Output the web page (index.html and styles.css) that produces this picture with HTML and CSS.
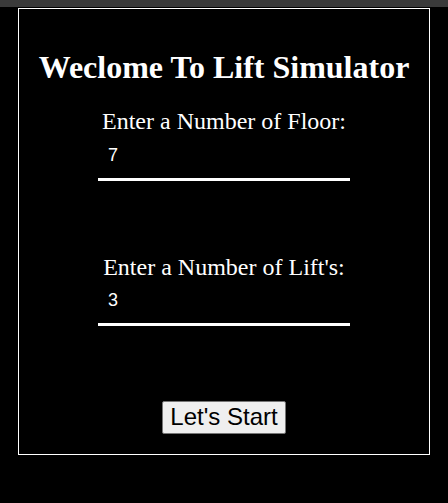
FILE: index.html
```html
<!DOCTYPE html>
<html lang="en">
<head>
<meta charset="utf-8">
<title>Lift Simulator</title>
<link rel="stylesheet" href="styles.css">
</head>
<body>
<div class="topbar"></div>
<main class="panel">
  <h1 class="title">Weclome To Lift Simulator</h1>
  <div class="field">
    <label class="field-label" for="floors">Enter a Number of Floor:</label>
    <input class="field-input" id="floors" type="text" value="7">
  </div>
  <div class="field field-second">
    <label class="field-label" for="lifts">Enter a Number of Lift's:</label>
    <input class="field-input" id="lifts" type="text" value="3">
  </div>
  <button class="start-btn" type="button">Let's Start</button>
</main>
</body>
</html>
```
FILE: styles.css
```css
html, body {
  margin: 0;
  padding: 0;
  background: #000;
  height: 100%;
  overflow: hidden;
}
body {
  font-family: "Liberation Serif", "Times New Roman", serif;
  color: #fff;
}
.topbar {
  height: 7px;
  background: #3a3a3a;
}
.panel {
  margin: 1px 18px 0;
  border: 1px solid #fff;
  box-sizing: border-box;
  height: 447px;
  display: flex;
  flex-direction: column;
  align-items: center;
  padding-top: 40px;
}
.title {
  margin: 0;
  font-size: 32px;
  font-weight: bold;
  line-height: 37px;
}
.field {
  display: flex;
  flex-direction: column;
  align-items: center;
  margin-top: 22px;
}
.field-second {
  margin-top: 73px;
}
.field-label {
  font-size: 24px;
  line-height: 27.6px;
}
.field-input {
  width: 252px;
  box-sizing: border-box;
  background: #000;
  color: #fff;
  border: none;
  border-bottom: 3px solid #fff;
  outline: none;
  padding: 9px 10px 13px;
  font-family: "Liberation Sans", Arial, sans-serif;
  font-size: 18px;
  line-height: 20px;
}
.start-btn {
  margin-top: 75px;
  font-family: "Liberation Sans", Arial, sans-serif;
  font-size: 24px;
  color: #000;
  background: #efefef;
  border: 1px solid #767676;
  border-radius: 2px;
  padding: 1px 7px 2px;
}
```
